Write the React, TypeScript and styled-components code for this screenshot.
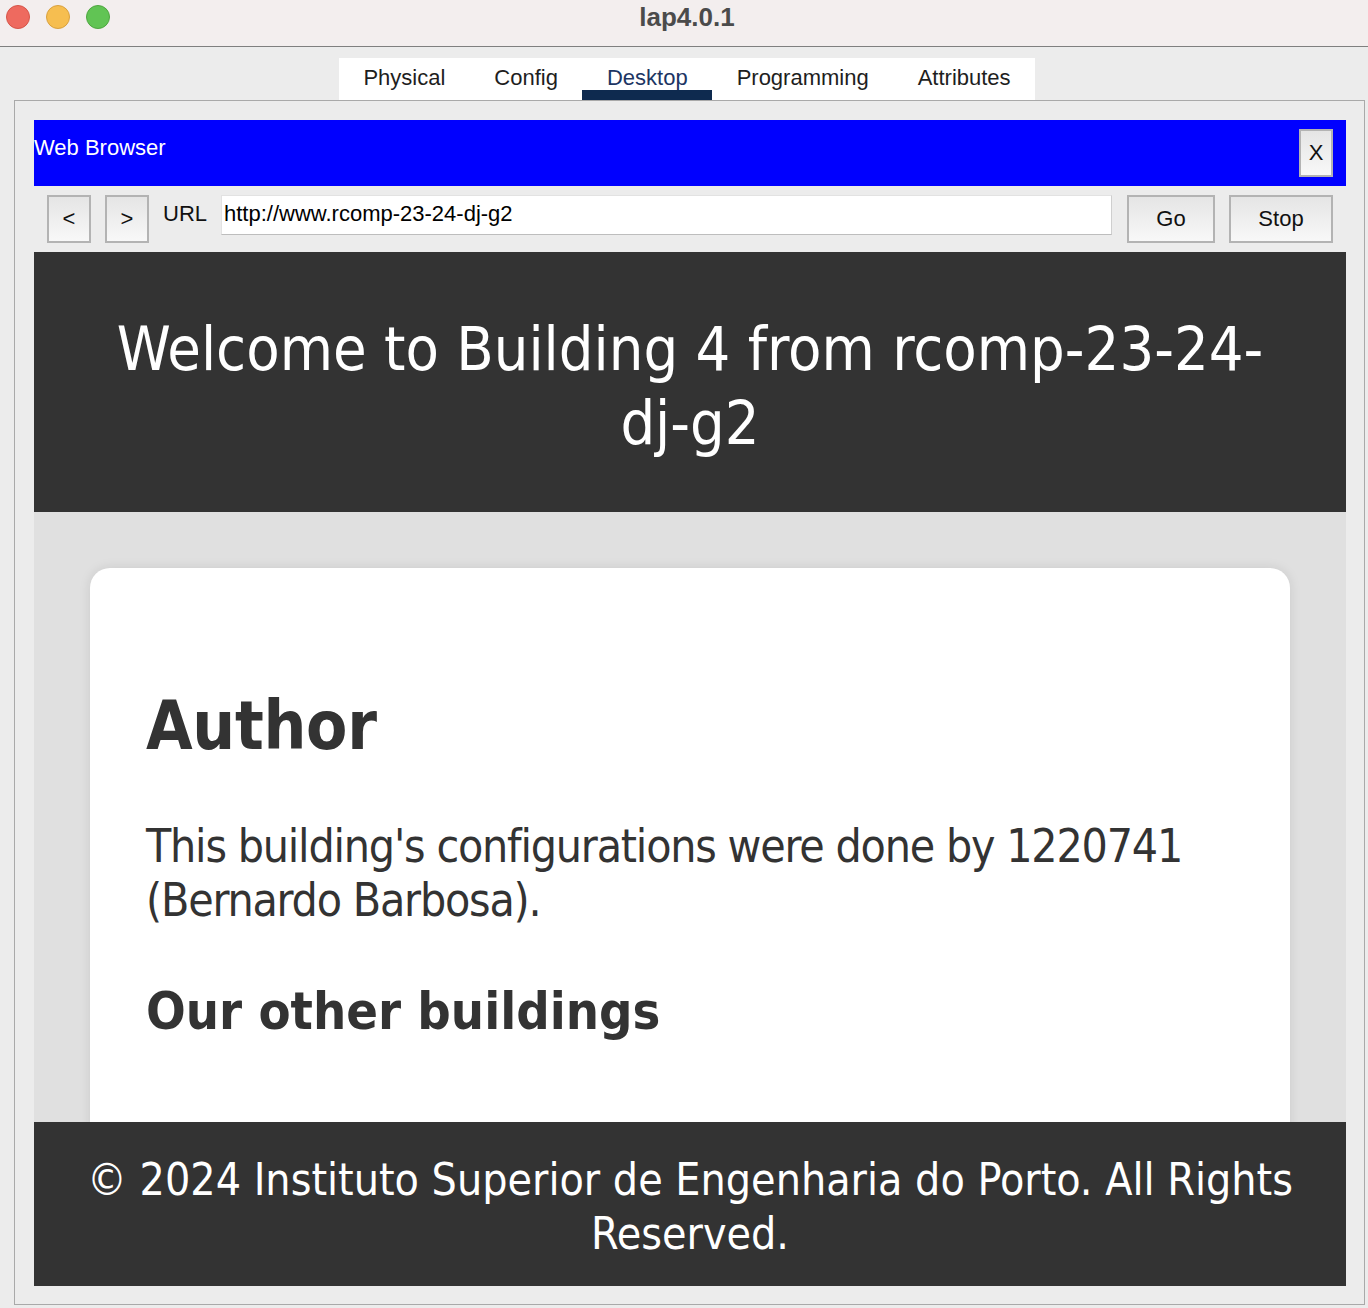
import React from "react";
import styled, { createGlobalStyle } from "styled-components";

const Global = createGlobalStyle`
  html, body { margin: 0; padding: 0; background: #ececec; }
  body { font-family: "Liberation Sans", Arial, sans-serif; overflow: hidden; }
  * { box-sizing: border-box; }
`;

const Window = styled.div`
  width: 1368px;
  height: 1308px;
  display: flex;
  flex-direction: column;
  background: #ececec;
`;

const TitleBar = styled.div`
  height: 47px;
  flex-shrink: 0;
  display: grid;
  grid-template-columns: 1fr auto 1fr;
  align-items: start;
  padding: 5px 6px 0;
  background: #f3eeee;
  border-bottom: 1px solid #7f7f7f;
`;

const Lights = styled.div`
  display: flex;
  gap: 16px;
`;

const Light = styled.span<{ $fill: string; $edge: string }>`
  width: 24px;
  height: 24px;
  border-radius: 50%;
  background: ${(p) => p.$fill};
  border: 1px solid ${(p) => p.$edge};
`;

const WindowTitle = styled.div`
  font-size: 26px;
  line-height: 24px;
  font-weight: bold;
  color: #4b4b4b;
  padding-left: 6px;
`;

const TabRow = styled.div`
  display: flex;
  justify-content: center;
  padding: 11px 0 0 6px;
  flex-shrink: 0;
`;

const TabStrip = styled.div`
  display: flex;
  height: 42px;
  background: #ffffff;
`;

const Tab = styled.div<{ $active?: boolean }>`
  display: flex;
  align-items: center;
  padding: 0 24.5px 2px;
  font-size: 22px;
  color: ${(p) => (p.$active ? "#1c3563" : "#1e1e1e")};
  box-shadow: ${(p) => (p.$active ? "inset 0 -10px 0 #0e2a4f" : "none")};
`;

const Panel = styled.div`
  flex: 1;
  min-height: 0;
  margin: 0 3px 3px 14px;
  border: 1px solid #a9a9a9;
  padding: 19px 18px 18px 19px;
  display: flex;
  flex-direction: column;
`;

const BrowserBar = styled.div`
  height: 66px;
  flex-shrink: 0;
  background: #0000ff;
  display: flex;
  align-items: center;
  justify-content: space-between;
  padding-right: 13px;
`;

const BarTitle = styled.div`
  color: #ffffff;
  font-size: 22px;
  margin-top: -10px;
`;

const GrayButton = styled.button<{ $w: number }>`
  width: ${(p) => p.$w}px;
  height: 48px;
  flex-shrink: 0;
  border: 2px solid #b3b3b3;
  background: linear-gradient(#e5e5e5, #f8f8f8);
  font-family: "Liberation Sans", Arial, sans-serif;
  font-size: 22px;
  color: #111;
  padding: 0;
  display: flex;
  align-items: center;
  justify-content: center;
`;

const Toolbar = styled.div`
  display: flex;
  align-items: flex-start;
  gap: 14px;
  margin-top: 9px;
  padding: 0 13px;
  flex-shrink: 0;
`;

const UrlLabel = styled.span`
  font-size: 22px;
  line-height: 38px;
  color: #111;
`;

const UrlInput = styled.div`
  flex: 1;
  height: 40px;
  background: #ffffff;
  border: 1px solid #e2e2e2;
  border-bottom-color: #bdbdbd;
  border-right-color: #cfcfcf;
  font-size: 22px;
  line-height: 36px;
  padding: 0 2px;
  color: #000;
  margin-right: 1px;
`;

const WebView = styled.div`
  flex: 1;
  min-height: 0;
  margin-top: 9px;
  display: flex;
  flex-direction: column;
  overflow: hidden;
  background: #e0e0e0;
  font-family: "DejaVu Sans Condensed", "DejaVu Sans", sans-serif;
`;

const PageHeader = styled.header`
  height: 260px;
  flex-shrink: 0;
  background: #333333;
  color: #ffffff;
  padding: 60px 70px 0;
  text-align: center;
`;

const Heading = styled.h1`
  margin: 0;
  font-weight: normal;
  font-size: 60.8px;
  line-height: 74px;
`;

const PageMain = styled.main`
  flex: 1;
  min-height: 0;
  overflow: hidden;
  padding: 56px 56px 0;
`;

const Card = styled.section`
  background: #ffffff;
  border-radius: 20px;
  box-shadow: 0 0 12px rgba(0, 0, 0, 0.1);
  padding: 56px 56px 200px;
  color: #333333;
`;

const CardTitle = styled.h2`
  margin: 62px 0 53px;
  font-size: 67px;
  line-height: 1.2;
  font-weight: bold;
  letter-spacing: -0.3px;
`;

const CardText = styled.p`
  margin: 0 0 53px;
  font-size: 46px;
  line-height: 54px;
  letter-spacing: -1.2px;
`;

const CardSubtitle = styled.h3`
  margin: 0;
  font-size: 52px;
  line-height: 1.2;
  font-weight: bold;
`;

const PageFooter = styled.footer`
  height: 164px;
  flex-shrink: 0;
  background: #333333;
  color: #ffffff;
  padding: 31px 20px 0;
  text-align: center;
  font-size: 44.3px;
  line-height: 54px;
`;

const tabs = ["Physical", "Config", "Desktop", "Programming", "Attributes"];

export default function App() {
  return (
    <>
      <Global />
      <Window>
        <TitleBar>
          <Lights>
            <Light $fill="#ee6a5f" $edge="#d65549" />
            <Light $fill="#f6be50" $edge="#d9a13f" />
            <Light $fill="#61c454" $edge="#4fa640" />
          </Lights>
          <WindowTitle>lap4.0.1</WindowTitle>
          <span />
        </TitleBar>
        <TabRow>
          <TabStrip>
            {tabs.map((t) => (
              <Tab key={t} $active={t === "Desktop"}>
                {t}
              </Tab>
            ))}
          </TabStrip>
        </TabRow>
        <Panel>
          <BrowserBar>
            <BarTitle>Web Browser</BarTitle>
            <GrayButton $w={34}>X</GrayButton>
          </BrowserBar>
          <Toolbar>
            <GrayButton $w={44}>&lt;</GrayButton>
            <GrayButton $w={44}>&gt;</GrayButton>
            <UrlLabel>URL</UrlLabel>
            <UrlInput>http://www.rcomp-23-24-dj-g2</UrlInput>
            <GrayButton $w={88}>Go</GrayButton>
            <GrayButton $w={104}>Stop</GrayButton>
          </Toolbar>
          <WebView>
            <PageHeader>
              <Heading>Welcome to Building 4 from rcomp-23-24-dj-g2</Heading>
            </PageHeader>
            <PageMain>
              <Card>
                <CardTitle>Author</CardTitle>
                <CardText>
                  This building's configurations were done by 1220741 (Bernardo Barbosa).
                </CardText>
                <CardSubtitle>Our other buildings</CardSubtitle>
              </Card>
            </PageMain>
            <PageFooter>© 2024 Instituto Superior de Engenharia do Porto. All Rights Reserved.</PageFooter>
          </WebView>
        </Panel>
      </Window>
    </>
  );
}
